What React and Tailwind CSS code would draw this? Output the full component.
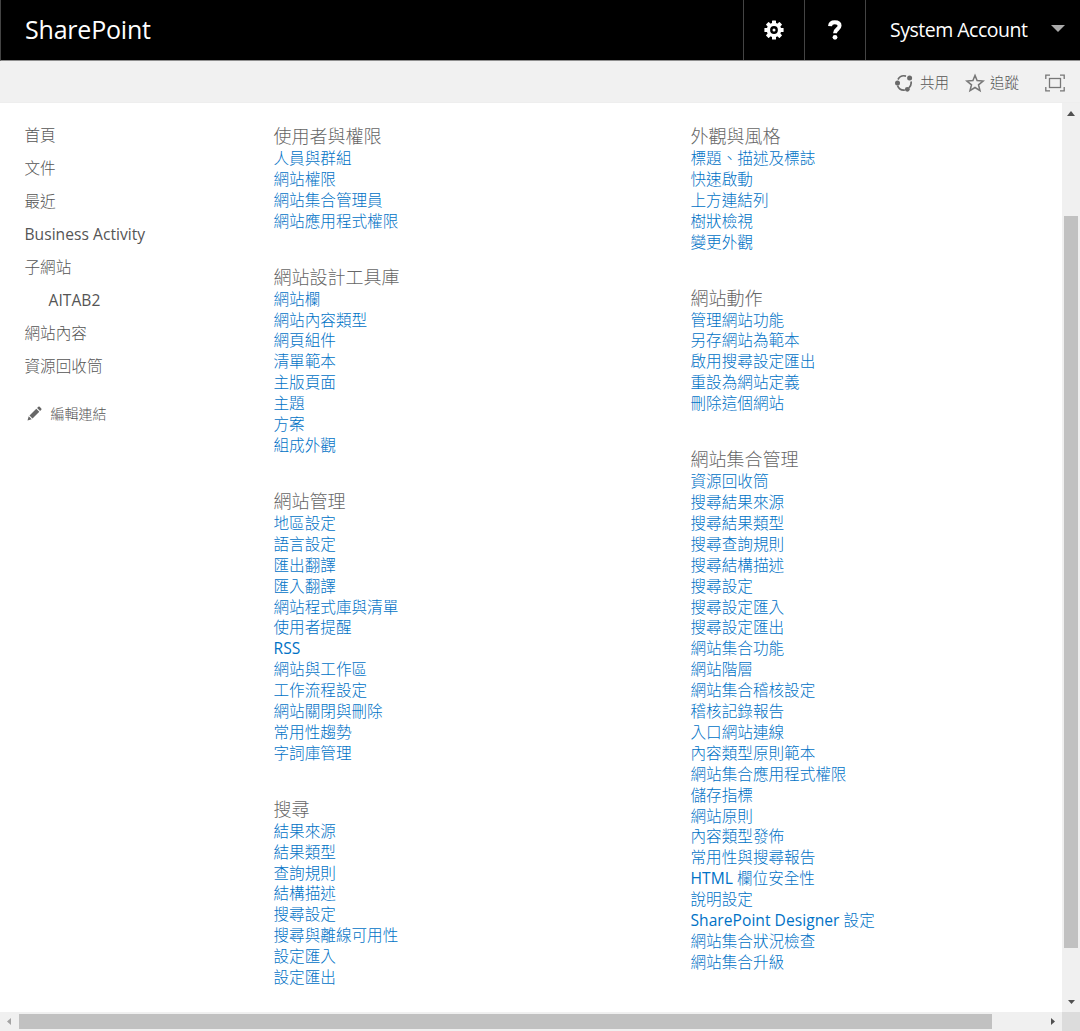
import React from 'react';

const leftGroups = [
  { title: '使用者與權限', links: ['人員與群組', '網站權限', '網站集合管理員', '網站應用程式權限'] },
  {
    title: '網站設計工具庫',
    links: ['網站欄', '網站內容類型', '網頁組件', '清單範本', '主版頁面', '主題', '方案', '組成外觀'],
  },
  {
    title: '網站管理',
    links: [
      '地區設定', '語言設定', '匯出翻譯', '匯入翻譯', '網站程式庫與清單', '使用者提醒',
      'RSS', '網站與工作區', '工作流程設定', '網站關閉與刪除', '常用性趨勢', '字詞庫管理',
    ],
  },
  {
    title: '搜尋',
    links: ['結果來源', '結果類型', '查詢規則', '結構描述', '搜尋設定', '搜尋與離線可用性', '設定匯入', '設定匯出'],
  },
];

const rightGroups = [
  { title: '外觀與風格', links: ['標題、描述及標誌', '快速啟動', '上方連結列', '樹狀檢視', '變更外觀'] },
  { title: '網站動作', links: ['管理網站功能', '另存網站為範本', '啟用搜尋設定匯出', '重設為網站定義', '刪除這個網站'] },
  {
    title: '網站集合管理',
    links: [
      '資源回收筒', '搜尋結果來源', '搜尋結果類型', '搜尋查詢規則', '搜尋結構描述', '搜尋設定',
      '搜尋設定匯入', '搜尋設定匯出', '網站集合功能', '網站階層', '網站集合稽核設定', '稽核記錄報告',
      '入口網站連線', '內容類型原則範本', '網站集合應用程式權限', '儲存指標', '網站原則', '內容類型發佈',
      '常用性與搜尋報告', 'HTML 欄位安全性', '說明設定', 'SharePoint Designer 設定', '網站集合狀況檢查',
      '網站集合升級',
    ],
  },
];

const navItems = [
  { label: '首頁' },
  { label: '文件' },
  { label: '最近' },
  { label: 'Business Activity' },
  { label: '子網站' },
  { label: 'AITAB2', nested: true },
  { label: '網站內容' },
  { label: '資源回收筒' },
];

// Latin runs keep the regular weight next to the lighter Chinese text.
function Label({ text }) {
  return text
    .split(/([A-Za-z0-9][A-Za-z0-9 ]*)/)
    .filter(Boolean)
    .map((part, i) =>
      /^[A-Za-z0-9]/.test(part) ? (
        <span key={i} className="font-normal whitespace-pre tracking-[0.03px]">{part}</span>
      ) : (
        <span key={i}>{part}</span>
      )
    );
}

function Group({ title, links }) {
  return (
    <section className="mb-[34px]">
      <h3 className="h-[23px] text-[18px] leading-[23px] font-light text-[#666]">{title}</h3>
      <ul>
        {links.map((link) => (
          <li key={link} className="h-[20.92px] text-[15.6px] leading-[20.92px] font-light text-[#0072c6]">
            <a><Label text={link} /></a>
          </li>
        ))}
      </ul>
    </section>
  );
}

function GearIcon() {
  return (
    <svg width="20" height="20" viewBox="-10 -10 20 20" fill="#fff">
      {[0, 45, 90, 135].map((a) => (
        <rect key={a} x="-2" y="-9.6" width="4" height="19.2" rx="0.6" transform={`rotate(${a})`} />
      ))}
      <circle r="7.3" />
      <circle r="3.9" fill="#000" />
      <circle r="1.5" />
    </svg>
  );
}

function HelpIcon() {
  return (
    <svg width="14" height="20" viewBox="0 0 14 20" fill="none">
      <path d="M2 6.2C2.2 3.3 4.2 2.2 6.8 2.2c2.8 0 4.8 1.3 4.8 3.6 0 3.4-4.6 3.3-4.6 7.4" stroke="#fff" strokeWidth="3.9" />
      <circle cx="7" cy="17.3" r="2.4" fill="#fff" />
    </svg>
  );
}

function ShareIcon() {
  return (
    <svg width="18" height="18" viewBox="0 0 18 18" fill="none" stroke="#6a6a6a" strokeWidth="1.7">
      <path d="M3 5.5A7 7 0 0 1 11 2.1M16 7.5a7 7 0 0 1-2.2 6.6M9.8 16.1A7 7 0 0 1 2.5 11.5" />
      <g fill="#6a6a6a" stroke="none">
        <circle cx="14.6" cy="3.9" r="2.5" />
        <circle cx="2.5" cy="9" r="2.5" />
        <circle cx="12.3" cy="15.3" r="2.4" />
      </g>
    </svg>
  );
}

function StarIcon() {
  return (
    <svg width="20" height="20" viewBox="0 0 20 20" fill="none" stroke="#777" strokeWidth="1.5">
      <path d="M10 2.4l2.1 5.2 6 .4-4.6 3.8 1.5 5.9-5-3.2-5 3.2 1.500-5.900L1.900 8l6-.4z" />
    </svg>
  );
}

function FocusIcon() {
  return (
    <svg width="20" height="18" viewBox="0 0 20 18" fill="none" stroke="#777" strokeWidth="1.3">
      <path d="M.8 5V1.200H5M15 1.200h4.200V5M19.200 13v3.800H15M5 16.800H.8V13" />
      <rect x="4.500" y="4.500" width="11" height="9" />
    </svg>
  );
}

function PencilIcon() {
  return (
    <svg width="15" height="15" viewBox="0 0 15 15" fill="#666">
      <path d="M.5 14.500l1.200-4.200 3 3zM2.500 9.500l6.800-6.700 3 3-6.800 6.700zM10.100 2l1.200-1.200q.7-.6 1.400 0l1.600 1.600q.6.700 0 1.400L13.100 5z" />
    </svg>
  );
}

export default function App() {
  return (
    <div className="flex h-[1031px] w-[1080px] flex-col overflow-hidden bg-white font-['Open_Sans','Noto_Sans_CJK_TC',sans-serif] whitespace-nowrap">
      <header className="flex h-[61px] shrink-0 items-stretch border-b border-l border-b-[#8f8f8f] border-l-[#444] bg-black text-white">
        <div className="flex flex-1 items-center pl-6 text-[25px] tracking-[-0.2px]">SharePoint</div>
        <button className="flex w-[61px] items-center justify-center border-l border-[#444]"><GearIcon /></button>
        <button className="flex w-[61px] items-center justify-center border-l border-[#444]"><HelpIcon /></button>
        <button className="flex w-[215px] items-center border-l border-[#444] pl-6 text-[19.5px]">
          <span className="w-[137px] tracking-[-0.5px]">System Account</span>
          <svg className="-mt-1 ml-6" width="14" height="7" viewBox="0 0 14 7"><path d="M0 0h14L7 7z" fill="#aaa" /></svg>
        </button>
      </header>

      <div className="flex h-[42px] shrink-0 items-center border-b border-[#eeeeee] bg-[#f1f1f1] pt-0.5 pl-[895px] text-[14.5px] font-light text-[#555]">
        <ShareIcon />
        <span className="ml-[7px] w-[45px]">共用</span>
        <StarIcon />
        <span className="ml-[5px] w-[55px]">追蹤</span>
        <FocusIcon />
      </div>

      <div className="flex min-h-0 flex-1">
        <main className="flex min-w-0 flex-1 overflow-hidden">
          <nav className="w-[273.5px] shrink-0 pt-4 pl-[24.5px] text-[15.6px] font-light text-[#555]">
            <ul>
              {navItems.map((item) => (
                <li key={item.label} className={item.nested ? 'h-[33px] pl-6 leading-[33px]' : 'h-[33px] leading-[33px]'}>
                  <Label text={item.label} />
                </li>
              ))}
            </ul>
            <div className="mt-[17px] flex h-[26px] items-center text-[14px]">
              <span className="w-[26px] pl-0.5"><PencilIcon /></span>
              編輯連結
            </div>
          </nav>
          <div className="w-[417px] shrink-0 pt-[22px]">
            {leftGroups.map((g) => <Group key={g.title} {...g} />)}
          </div>
          <div className="pt-[22px]">
            {rightGroups.map((g) => <Group key={g.title} {...g} />)}
          </div>
        </main>
        <div className="flex w-[18px] shrink-0 flex-col items-center bg-[#f0f0f0]">
          <div className="flex h-[113px] pt-2">
            <svg width="8" height="5" viewBox="0 0 8 5"><path d="M4 0l4 5H0z" fill="#505050" /></svg>
          </div>
          <div className="h-[732px] w-[14px] bg-[#c1c1c1]" />
          <svg className="mt-[52px]" width="7" height="4" viewBox="0 0 7 4"><path d="M0 0h7L3.500 4z" fill="#505050" /></svg>
        </div>
      </div>

      <div className="flex h-[19px] shrink-0 items-center bg-[#f0f0f0]">
        <div className="flex w-[19px] pl-[7px]">
          <svg width="4" height="7" viewBox="0 0 4 7"><path d="M4 0v7L0 3.500z" fill="#a3a3a3" /></svg>
        </div>
        <div className="h-[15px] w-[973px] bg-[#c1c1c1]" />
        <div className="flex w-[70px] pl-[59px]">
          <svg width="4" height="7" viewBox="0 0 4 7"><path d="M0 0v7l4-3.500z" fill="#505050" /></svg>
        </div>
        <div className="h-full w-[18px] bg-[#dcdcdc]" />
      </div>
    </div>
  );
}
